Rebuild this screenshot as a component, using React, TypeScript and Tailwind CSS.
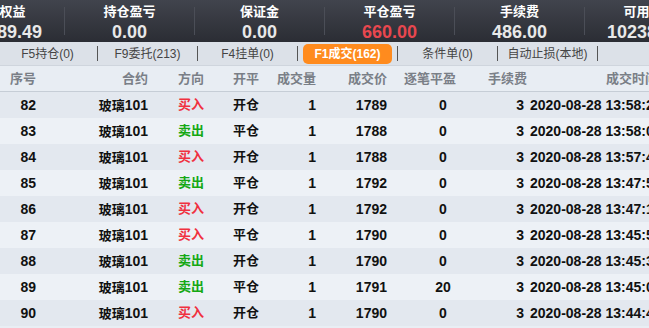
const font = { fontFamily: '"Liberation Sans", "Noto Sans CJK SC", sans-serif' };

const summary = [
  { label: '动态权益', value: '102389.49' },
  { label: '持仓盈亏', value: '0.00' },
  { label: '保证金', value: '0.00' },
  { label: '平仓盈亏', value: '660.00', red: true },
  { label: '手续费', value: '486.00' },
  { label: '可用资金', value: '102389.49' },
];

const tabs = ['F5持仓(0)', 'F9委托(213)', 'F4挂单(0)', 'F1成交(162)', '条件单(0)', '自动止损(本地)'];

const trades = [
  { id: 82, dir: '买入', oc: '开仓', price: 1789, pnl: 0, time: '2020-08-28 13:58:21' },
  { id: 83, dir: '卖出', oc: '平仓', price: 1788, pnl: 0, time: '2020-08-28 13:58:04' },
  { id: 84, dir: '买入', oc: '开仓', price: 1788, pnl: 0, time: '2020-08-28 13:57:40' },
  { id: 85, dir: '卖出', oc: '平仓', price: 1792, pnl: 0, time: '2020-08-28 13:47:52' },
  { id: 86, dir: '买入', oc: '开仓', price: 1792, pnl: 0, time: '2020-08-28 13:47:11' },
  { id: 87, dir: '买入', oc: '平仓', price: 1790, pnl: 0, time: '2020-08-28 13:45:58' },
  { id: 88, dir: '卖出', oc: '开仓', price: 1790, pnl: 0, time: '2020-08-28 13:45:30' },
  { id: 89, dir: '卖出', oc: '平仓', price: 1791, pnl: 20, time: '2020-08-28 13:45:09' },
  { id: 90, dir: '买入', oc: '开仓', price: 1790, pnl: 0, time: '2020-08-28 13:44:47' },
];

export default function App() {
  return (
    <div className="w-[649px] h-[328px] overflow-hidden bg-[#e9eef4]" style={font}>
      {/* Account summary */}
      <div className="h-[42px] bg-gradient-to-b from-[#41444d] to-[#2b2d34] flex ml-[-65px]">
        {summary.map((s, i) => (
          <div key={s.label} className="flex items-center shrink-0">
            {i > 0 && <div className="w-px h-[28px] bg-[#4b4e57] shrink-0" />}
            <div className="w-[129px] shrink-0 h-[42px] flex flex-col items-center pt-[3px] whitespace-nowrap">
              <div className="text-[13px] font-bold text-white leading-[17px]">{s.label}</div>
              <div
                className={`text-[18px] font-bold leading-[20px] mt-[2px] ${s.red ? 'text-[#e8474f]' : 'text-[#e8e8e8]'}`}
              >
                {s.value}
              </div>
            </div>
          </div>
        ))}
      </div>

      {/* Tabs */}
      <div className="h-[24px] bg-[#dce1e8] flex items-center ml-[-2px] border-b border-[#cfd5dd]">
        {tabs.map((t, i) => (
          <div key={t} className="flex items-center shrink-0">
            <div className="w-[99px] shrink-0 flex justify-center whitespace-nowrap">
              {i === 3 ? (
                <div className="w-[89px] h-[20px] rounded-[5px] bg-[#ff8b1e] text-white font-bold text-[12px] flex items-center justify-center">
                  {t}
                </div>
              ) : (
                <span className="text-[12px] text-[#444]">{t}</span>
              )}
            </div>
            <div className="w-px h-[15px] bg-[#555] shrink-0" />
          </div>
        ))}
      </div>

      {/* Header row */}
      <div className="h-[26px] flex items-center bg-[#e8edf3] border-b border-[#c6cdd6] text-[13px] font-bold text-[#7a7f87] whitespace-nowrap">
        <div className="w-[36px] shrink-0 text-right">序号</div>
        <div className="w-[112px] shrink-0 text-right">合约</div>
        <div className="w-[85px] shrink-0 pl-[30px]">方向</div>
        <div className="w-[44px] shrink-0">开平</div>
        <div className="w-[39px] shrink-0 text-right">成交量</div>
        <div className="w-[71px] shrink-0 text-right">成交价</div>
        <div className="w-[73px] shrink-0 pl-[17px]">逐笔平盈</div>
        <div className="w-[67px] shrink-0 text-right">手续费</div>
        <div className="shrink-0 pl-[79px]">成交时间</div>
      </div>

      {/* Rows */}
      {trades.map((r, i) => (
        <div
          key={r.id}
          className={`h-[26px] flex items-center font-bold text-[14px] text-[#111] whitespace-nowrap ${
            i % 2 === 0 ? 'bg-[#e3e8ef]' : 'bg-[#edf1f6]'
          }`}
        >
          <div className="w-[36px] shrink-0 text-right">{r.id}</div>
          <div className="w-[112px] shrink-0 text-right">
            <span className="text-[13px]">玻璃</span>101
          </div>
          <div
            className={`w-[85px] shrink-0 pl-[30px] text-[13px] ${
              r.dir === '买入' ? 'text-[#f0313f]' : 'text-[#14a814]'
            }`}
          >
            {r.dir}
          </div>
          <div className="w-[44px] shrink-0 text-[13px]">{r.oc}</div>
          <div className="w-[39px] shrink-0 text-right">1</div>
          <div className="w-[71px] shrink-0 text-right">{r.price}</div>
          <div className="w-[73px] shrink-0 pl-[39px] text-center">{r.pnl}</div>
          <div className="w-[64px] shrink-0 text-right">3</div>
          <div className="shrink-0 pl-[6px]">{r.time}</div>
        </div>
      ))}
    </div>
  );
}
